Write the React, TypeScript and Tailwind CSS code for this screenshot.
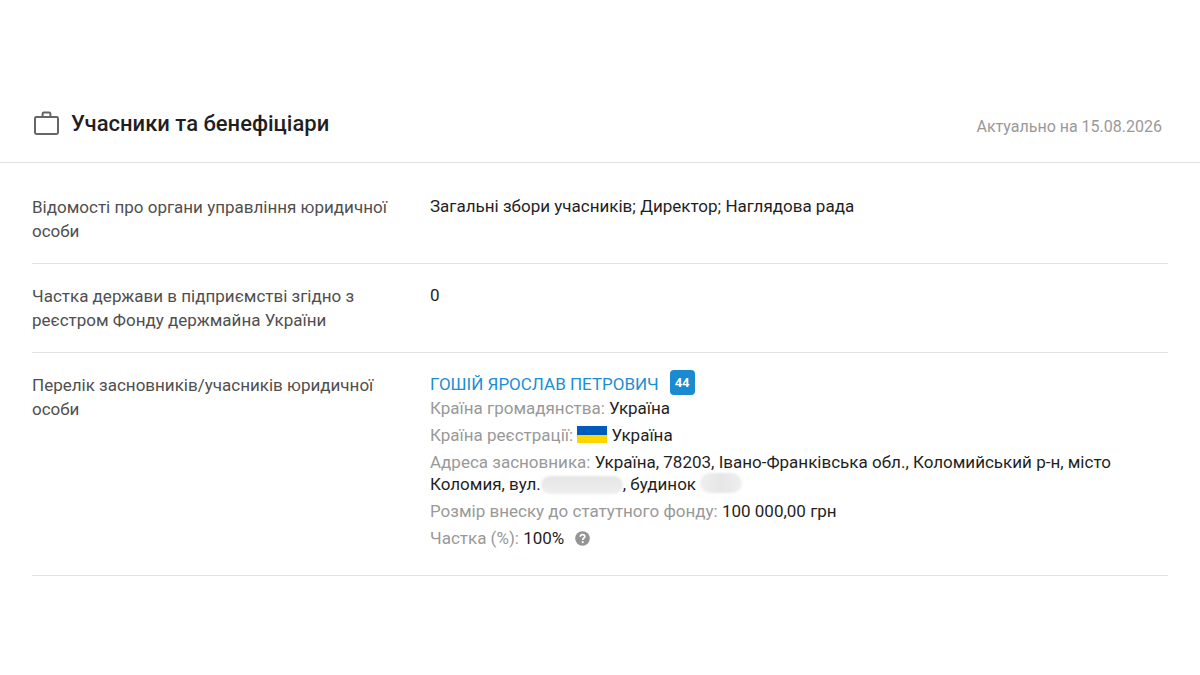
import type { ReactNode } from "react";

function Row({ label, children }: { label: string; children: ReactNode }) {
  return (
    <div className="grid grid-cols-[minmax(0,366fr)_minmax(0,738fr)] gap-x-8 border-b border-[#e2e2e2] pt-5 pb-5 last:pb-[26px]">
      <dt className="text-[17px] leading-[24px] text-[#4f4f4f]">{label}</dt>
      <dd className="text-[17px] leading-[22px] text-[#1f1f1f]">{children}</dd>
    </div>
  );
}

function Field({ name, children }: { name: string; children: ReactNode }) {
  return (
    <p>
      <span className="text-[#999999]">{name}:</span> {children}
    </p>
  );
}

function BriefcaseIcon() {
  return (
    <svg width="26" height="26" viewBox="0 0 26 26" fill="none" stroke="#666666" strokeWidth="2" aria-hidden="true">
      <rect x="2" y="6" width="23" height="17" rx="1.4" />
      <path d="M9.600 6V2.800Q9.600 1.500 10.900 1.500h5.200Q17.400 1.500 17.400 2.800V6" />
    </svg>
  );
}

function FlagIcon() {
  return (
    <svg className="inline-block align-[-2px]" width="30" height="17" viewBox="0 0 30 17" aria-hidden="true">
      <path fill="#005bbb" d="M0 0h30v9H0z" />
      <path fill="#ffd500" d="M0 9h30v8H0z" />
    </svg>
  );
}

function HelpIcon() {
  return (
    <svg width="15" height="15" viewBox="0 0 14 14" aria-hidden="true">
      <circle cx="7" cy="7" r="6.8" fill="#949494" />
      <path
        d="M4.9 5.4C4.9 4 5.8 3.3 7 3.3s2.2.8 2.2 1.9C9.200 6.600 7.200 6.600 7.200 8.300"
        fill="none"
        stroke="#fff"
        strokeWidth="1.6"
      />
      <circle cx="7.200" cy="10.400" r="1" fill="#fff" />
    </svg>
  );
}

export default function App() {
  return (
    <main className="min-h-screen bg-white pt-[104px] font-['Roboto','Liberation_Sans',sans-serif]">
      <header className="flex items-center justify-between border-b border-[#e2e2e2] pr-[38px] pb-[18px] pl-[33px]">
        <div className="flex items-center gap-3">
          <BriefcaseIcon />
          <h1 className="text-[22px] leading-[40px] font-medium text-[#1f1f1f]">Учасники та бенефіціари</h1>
        </div>
        <p className="pt-[6px] text-base leading-[30px] text-[#999999]">Актуально на 15.08.2026</p>
      </header>
      <dl className="mx-8 pt-3">
        <Row label="Відомості про органи управління юридичної особи">
          Загальні збори учасників; Директор; Наглядова рада
        </Row>
        <Row label="Частка держави в підприємстві згідно з реєстром Фонду держмайна України">0</Row>
        <Row label="Перелік засновників/учасників юридичної особи">
          <div className="flex items-end gap-[11px]">
            <a href="#founder" className="text-[#1a8fd1]">
              ГОШІЙ ЯРОСЛАВ ПЕТРОВИЧ
            </a>
            <a
              href="#relations"
              className="-mt-[3px] flex h-[25px] w-[25px] items-center justify-center rounded-[4px] bg-[#1a8bd0] text-[13px] font-bold text-white"
            >
              44
            </a>
          </div>
          <div className="mt-[2px] flex flex-col gap-[5px]">
            <Field name="Країна громадянства">Україна</Field>
            <Field name="Країна реєстрації">
              <FlagIcon /> Україна
            </Field>
            <Field name="Адреса засновника">
              Україна, 78203, Івано-Франківська обл., Коломийський р-н, місто Коломия, вул.
              <span className="inline-block h-[18px] w-[82px] rounded-[9px] bg-linear-to-b from-[#e6e6e6] to-[#efefef] align-[-4px] blur-[1px]" />
              , будинок{" "}
              <span className="inline-block h-[20px] w-[42px] rounded-[10px] bg-linear-to-r from-[#efefef] via-[#e6e6e6] to-[#efefef] align-[-3px] blur-[1px]" />
            </Field>
            <Field name="Розмір внеску до статутного фонду">100 000,00 грн</Field>
            <Field name="Частка (%)">
              100%
              <button type="button" aria-label="Довідка" className="ml-[11px] inline-block align-[-2px]">
                <HelpIcon />
              </button>
            </Field>
          </div>
        </Row>
      </dl>
    </main>
  );
}
